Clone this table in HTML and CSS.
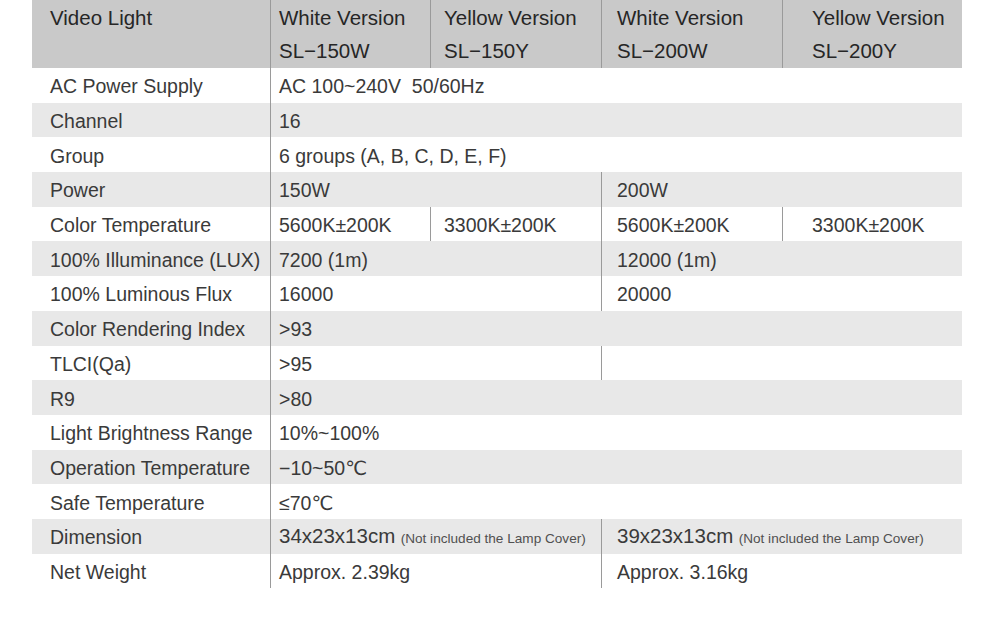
FILE: index.html
```html
<!DOCTYPE html>
<html lang="en">
<head>
<meta charset="utf-8">
<title>Video Light Specifications</title>
<link rel="stylesheet" href="styles.css">
</head>
<body>
<table class="spec">
  <colgroup>
    <col class="c1"><col class="c2"><col class="c3"><col class="c4"><col class="c5">
  </colgroup>
  <thead>
    <tr class="head">
      <th class="k">Video Light</th>
      <th class="v2 line">White Version<br>SL−150W</th>
      <th class="v3 line">Yellow Version<br>SL−150Y</th>
      <th class="v4 line">White Version<br>SL−200W</th>
      <th class="v5 line">Yellow Version<br>SL−200Y</th>
    </tr>
  </thead>
  <tbody>
    <tr><td class="k">AC Power Supply</td><td class="v2 line" colspan="4">AC 100~240V&nbsp; 50/60Hz</td></tr>
    <tr class="alt"><td class="k">Channel</td><td class="v2 line" colspan="4">16</td></tr>
    <tr><td class="k">Group</td><td class="v2 line" colspan="4">6 groups (A, B, C, D, E, F)</td></tr>
    <tr class="alt"><td class="k">Power</td><td class="v2 line" colspan="2">150W</td><td class="v4 line" colspan="2">200W</td></tr>
    <tr><td class="k">Color Temperature</td><td class="v2 line">5600K±200K</td><td class="v3 line">3300K±200K</td><td class="v4 line">5600K±200K</td><td class="v5 line">3300K±200K</td></tr>
    <tr class="alt"><td class="k">100% Illuminance (LUX)</td><td class="v2 line" colspan="2">7200 (1m)</td><td class="v4 line" colspan="2">12000 (1m)</td></tr>
    <tr><td class="k">100% Luminous Flux</td><td class="v2 line" colspan="2">16000</td><td class="v4 line" colspan="2">20000</td></tr>
    <tr class="alt"><td class="k">Color Rendering Index</td><td class="v2 line" colspan="4">&gt;93</td></tr>
    <tr><td class="k">TLCI(Qa)</td><td class="v2 line" colspan="2">&gt;95</td><td class="v4 line" colspan="2"></td></tr>
    <tr class="alt"><td class="k">R9</td><td class="v2 line" colspan="4">&gt;80</td></tr>
    <tr><td class="k">Light Brightness Range</td><td class="v2 line" colspan="4">10%~100%</td></tr>
    <tr class="alt"><td class="k">Operation Temperature</td><td class="v2 line" colspan="4">−10~50℃</td></tr>
    <tr><td class="k">Safe Temperature</td><td class="v2 line" colspan="4">≤70℃</td></tr>
    <tr class="alt"><td class="k">Dimension</td><td class="v2 line" colspan="2"><span class="big">34x23x13cm</span> <span class="note">(Not included the Lamp Cover)</span></td><td class="v4 line" colspan="2"><span class="big">39x23x13cm</span> <span class="note">(Not included the Lamp Cover)</span></td></tr>
    <tr><td class="k">Net Weight</td><td class="v2 line" colspan="2">Approx. 2.39kg</td><td class="v4 line" colspan="2">Approx. 3.16kg</td></tr>
  </tbody>
</table>
</body>
</html>
```

FILE: styles.css
```css
html, body {
  margin: 0;
  padding: 0;
  background: #ffffff;
}

body {
  font-family: "Liberation Sans", Arial, "DejaVu Sans", sans-serif;
  color: #3a3a3a;
}

.spec {
  margin-left: 32px;
  width: 930px;
  table-layout: fixed;
  border-collapse: separate;
  border-spacing: 0;
}

.c1 { width: 238px; }
.c2 { width: 160px; }
.c3 { width: 171px; }
.c4 { width: 181px; }
.c5 { width: 180px; }

.spec th,
.spec td {
  box-sizing: border-box;
  padding: 0;
  text-align: left;
  vertical-align: middle;
  white-space: nowrap;
  overflow: hidden;
}

.head th {
  background: #c9c9c9;
  height: 68px;
  font-size: 20.5px;
  font-weight: normal;
  line-height: 33px;
  color: #262626;
  padding-bottom: 1px;
}

.head th.k {
  vertical-align: top;
  padding-top: 1px;
}

.spec td {
  height: 34.7px;
  font-size: 19.5px;
  line-height: 24px;
  padding-top: 2px;
}

.alt td {
  background: #e8e8e8;
}

.k { padding-left: 18px !important; }
.v2 { padding-left: 8px !important; }
.v3 { padding-left: 13px !important; }
.v4 { padding-left: 15px !important; }
.v5 { padding-left: 29px !important; }

.line {
  border-left: 1px solid #9a9a9a;
}

.big {
  font-size: 20.5px;
}

.note {
  font-size: 13.6px;
  color: #505050;
}
```
